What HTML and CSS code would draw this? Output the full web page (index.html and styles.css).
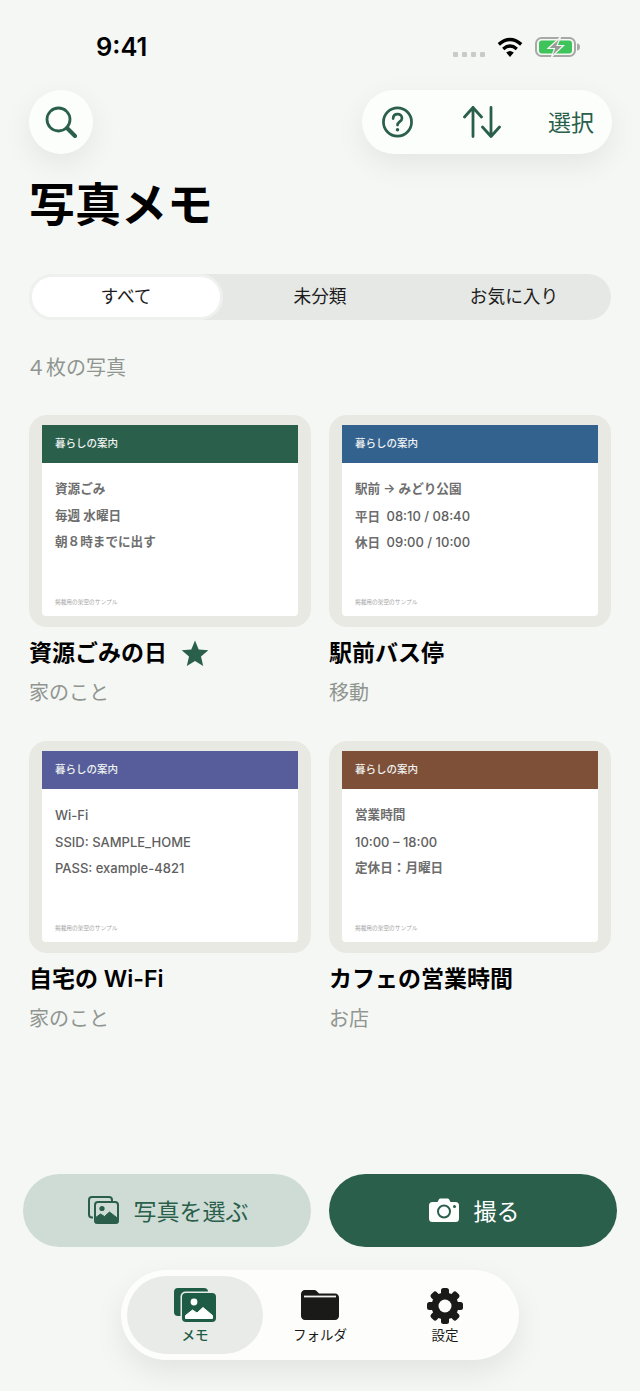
FILE: index.html
```html
<!DOCTYPE html>
<html lang="ja">
<head>
    <meta charset="UTF-8">
    <meta name="viewport" content="width=device-width, initial-scale=1.0">
    <title>写真メモ</title>
    <link rel="stylesheet" href="styles.css">
</head>
<body>
    <div class="page">
        <div class="status">
            <span class="time">9:41</span>
            <div class="status-right">
                <div class="dots"><i></i><i></i><i></i><i></i></div>
                <svg class="wifi" viewBox="0 0 26 20">
                    <path d="M1.8 7.4Q13-2.2 24.2 7.4" fill="none" stroke="#000" stroke-width="3.4"/>
                    <path d="M6.2 12Q13 6.2 19.8 12" fill="none" stroke="#000" stroke-width="3.4"/>
                    <path d="M13 20L9.2 15.4Q13 12.4 16.8 15.4Z" fill="#000"/>
                </svg>
                <svg class="battery" viewBox="0 0 46 20">
                    <rect x="1" y="1" width="39" height="18" rx="5.5" fill="none" stroke="#a7a9a5" stroke-width="2"/>
                    <rect x="4" y="3.5" width="33" height="13" rx="3" fill="#3ec45a"/>
                    <path d="M42 6.5c2 0 3 1.5 3 3.5s-1 3.5-3 3.5z" fill="#a7a9a5"/>
                    <path d="M25.5 0L13 11.5h6.500L16.500 20 28.500 8.500h-6.500z" fill="#989a96" stroke="#f5f7f5" stroke-width="1.2"/>
                </svg>
            </div>
        </div>

        <main class="main">
            <header class="toolbar">
                <button class="round-btn">
                    <svg class="icon-search" viewBox="0 0 32 32" fill="none" stroke="#2a5f4b">
                        <circle cx="13.5" cy="13.5" r="11.5" stroke-width="2.8"/>
                        <path d="M22 22l8 8" stroke-width="4" stroke-linecap="round"/>
                    </svg>
                </button>
                <div class="tool-pill">
                    <svg class="icon-help" viewBox="0 0 32 32" fill="none" stroke="#2a5f4b">
                        <circle cx="16" cy="16" r="14.5" stroke-width="2.8"/>
                        <path d="M11.5 12.5c0-3 2-4.700 4.600-4.700s4.500 1.700 4.500 4.200c0 3.600-4.600 3.600-4.600 7.200" stroke-width="2.8" stroke-linecap="round"/>
                        <circle cx="16" cy="24" r="1.8" fill="#2a5f4b" stroke="none"/>
                    </svg>
                    <svg class="icon-sort" viewBox="0 0 38 32" fill="none" stroke="#2a5f4b" stroke-width="2.8" stroke-linecap="round" stroke-linejoin="round">
                        <path d="M10 30.500V1.500M1.500 11L10 1.500 18.500 11"/>
                        <path d="M28 1.500v29M19.500 21l8.500 9.500 8.500-9.500"/>
                    </svg>
                    <span class="select-label">選択</span>
                </div>
            </header>

            <h1 class="title">写真メモ</h1>

            <div class="segments">
                <div class="segment active">すべて</div>
                <div class="segment">未分類</div>
                <div class="segment">お気に入り</div>
            </div>

            <p class="count">４枚の写真</p>

            <section class="memos">
                <article class="memo">
                    <div class="photo">
                        <div class="sheet">
                            <div class="sheet-head green">暮らしの案内</div>
                            <div class="sheet-body">
                                <p>資源ごみ</p>
                                <p>毎週 水曜日</p>
                                <p>朝８時までに出す</p>
                            </div>
                            <div class="sheet-foot">掲載用の架空のサンプル</div>
                        </div>
                    </div>
                    <h3 class="memo-title">資源ごみの日
                        <svg class="star" viewBox="0 0 28 27"><path d="M14 .5l3.700 8.900 9.600.8-7.300 6.300 2.200 9.400L14 20.900 5.800 25.900 8 16.500.7 10.200l9.600-.8z" fill="#2a5f4b"/></svg>
                    </h3>
                    <p class="memo-sub">家のこと</p>
                </article>
                <article class="memo">
                    <div class="photo">
                        <div class="sheet">
                            <div class="sheet-head blue">暮らしの案内</div>
                            <div class="sheet-body">
                                <p>駅前 → みどり公園</p>
                                <p>平日&nbsp; <span class="latin">08:10 / 08:40</span></p>
                                <p>休日&nbsp; <span class="latin">09:00 / 10:00</span></p>
                            </div>
                            <div class="sheet-foot">掲載用の架空のサンプル</div>
                        </div>
                    </div>
                    <h3 class="memo-title">駅前バス停</h3>
                    <p class="memo-sub">移動</p>
                </article>
                <article class="memo">
                    <div class="photo">
                        <div class="sheet">
                            <div class="sheet-head indigo">暮らしの案内</div>
                            <div class="sheet-body">
                                <p class="latin">Wi-Fi</p>
                                <p class="latin">SSID: SAMPLE_HOME</p>
                                <p class="latin">PASS: example-4821</p>
                            </div>
                            <div class="sheet-foot">掲載用の架空のサンプル</div>
                        </div>
                    </div>
                    <h3 class="memo-title">自宅の Wi-Fi</h3>
                    <p class="memo-sub">家のこと</p>
                </article>
                <article class="memo">
                    <div class="photo">
                        <div class="sheet">
                            <div class="sheet-head brown">暮らしの案内</div>
                            <div class="sheet-body">
                                <p>営業時間</p>
                                <p class="latin">10:00 – 18:00</p>
                                <p>定休日：月曜日</p>
                            </div>
                            <div class="sheet-foot">掲載用の架空のサンプル</div>
                        </div>
                    </div>
                    <h3 class="memo-title">カフェの営業時間</h3>
                    <p class="memo-sub">お店</p>
                </article>
            </section>
        </main>

        <div class="actions">
            <button class="action pick">
                <svg class="icon-photos" viewBox="0 0 31 28">
                    <path d="M5 21.500H4a3 3 0 0 1-3-3V4a3 3 0 0 1 3-3h17a3 3 0 0 1 3 3v1" fill="none" stroke="#2a5f4b" stroke-width="2"/>
                    <rect x="7" y="6" width="23" height="21" rx="3" fill="none" stroke="#2a5f4b" stroke-width="2"/>
                    <circle cx="14" cy="12.500" r="2.600" fill="#2a5f4b"/>
                    <path d="M7 27v-5l5.500-4 4 2.500 5-4.500 8.500 6.500V27z" fill="#2a5f4b" stroke="#2a5f4b" stroke-linejoin="round"/>
                </svg>
                写真を選ぶ
            </button>
            <button class="action shoot">
                <svg class="icon-camera" viewBox="0 0 30 24">
                    <path d="M3.500 4h5l1.500-2.700c.3-.5.700-.8 1.300-.8h7.400c.6 0 1 .3 1.300.8L21.500 4h5A3.500 3.500 0 0 1 30 7.500v13a3.500 3.500 0 0 1-3.500 3.500h-23A3.500 3.500 0 0 1 0 20.500v-13A3.500 3.500 0 0 1 3.500 4z" fill="#fff"/>
                    <circle cx="15" cy="13.500" r="6" fill="none" stroke="#2a5f4b" stroke-width="2"/>
                    <circle cx="25.500" cy="8.500" r="1.500" fill="#2a5f4b"/>
                </svg>
                撮る
            </button>
        </div>

        <nav class="tabbar">
            <div class="tab active">
                <svg class="icon-memo" viewBox="0 0 42 34">
                    <rect x="0" y="0" width="34" height="28" rx="4" fill="#1f5c45"/>
                    <rect x="6.500" y="3.500" width="35.500" height="30.500" rx="5" fill="#e9ebe9"/>
                    <rect x="8" y="5" width="34" height="29" rx="4" fill="#1f5c45"/>
                    <circle cx="20" cy="14" r="3.400" fill="#fff"/>
                    <path d="M11.500 30.500v-3l7-5.500 4.500 3 6-5.500 9.500 8v3z" fill="#fff" stroke="#fff" stroke-linejoin="round"/>
                </svg>
                <span class="tab-label">メモ</span>
            </div>
            <div class="tab">
                <svg class="icon-folder" viewBox="0 0 38 30">
                    <path d="M4 0h9c1.500 0 2.300.6 3.300 1.700L18 3.500h16c2.300 0 4 1.700 4 4V26c0 2.300-1.700 4-4 4H4c-2.300 0-4-1.700-4-4V4c0-2.300 1.700-4 4-4z" fill="#1a1a18"/>
                    <path d="M3 6.500h32" stroke="#f3f3f1" stroke-width="1.800"/>
                </svg>
                <span class="tab-label">フォルダ</span>
            </div>
            <div class="tab">
                <svg class="icon-gear" viewBox="0 0 36 36">
                    <circle cx="18" cy="18" r="13.500" fill="#1a1a18"/>
                    <g fill="#1a1a18">
                        <rect x="14" y="0" width="8" height="36" rx="2.500"/>
                        <rect x="14" y="0" width="8" height="36" rx="2.500" transform="rotate(45 18 18)"/>
                        <rect x="14" y="0" width="8" height="36" rx="2.500" transform="rotate(90 18 18)"/>
                        <rect x="14" y="0" width="8" height="36" rx="2.500" transform="rotate(135 18 18)"/>
                    </g>
                    <circle cx="18" cy="18" r="6.500" fill="#fdfefc"/>
                </svg>
                <span class="tab-label">設定</span>
            </div>
        </nav>
    </div>
</body>
</html>
```

FILE: styles.css
```css
* {
    box-sizing: border-box;
}
body {
    margin: 0;
    background-color: #f5f7f5;
    color: #000;
    font-family: Inter, "Noto Sans CJK JP", sans-serif;
}
p, h1, h3 {
    margin: 0;
}
button {
    border: 0;
    padding: 0;
    font-family: inherit;
}
svg {
    display: block;
    flex: none;
}
.page {
    display: flex;
    flex-direction: column;
    min-height: 1391px;
    padding-bottom: 31px;
}

/* status bar */
.status {
    display: flex;
    justify-content: space-between;
    align-items: center;
    height: 28px;
    margin: 33px 0 29px;
    padding: 0 59px 0 96px;
}
.time {
    font-size: 25.5px;
    font-weight: 600;
    line-height: 28px;
}
.status-right {
    display: flex;
    align-items: center;
}
.dots {
    display: flex;
    gap: 4px;
    margin: 14px 12px 0 0;
}
.dots i {
    width: 5px;
    height: 5px;
    border-radius: 1px;
    background: #c9cbc9;
}
.wifi {
    width: 26px;
    height: 20px;
    margin-right: 12px;
}
.battery {
    width: 46px;
    height: 20px;
}

/* top */
.main {
    padding: 0 29px;
}
.toolbar {
    display: flex;
    justify-content: space-between;
    margin-right: -1px;
}
.round-btn {
    display: flex;
    align-items: center;
    justify-content: center;
    width: 64px;
    height: 64px;
    border-radius: 50%;
    background: #fcfefc;
    box-shadow: 0 10px 30px rgba(0, 0, 0, 0.07);
}
.icon-search {
    width: 32px;
    height: 32px;
}
.tool-pill {
    display: flex;
    align-items: center;
    width: 250px;
    height: 64px;
    padding-left: 20px;
    border-radius: 32px;
    background: #fcfefc;
    box-shadow: 0 10px 30px rgba(0, 0, 0, 0.07);
}
.icon-help {
    width: 31px;
    height: 32px;
    margin-right: 50px;
}
.icon-sort {
    width: 38px;
    height: 32px;
    margin-right: 47px;
}
.select-label {
    padding-top: 2px;
    color: #2a5f4b;
    font-size: 23px;
    line-height: 30px;
}
.title {
    margin-top: 25px;
    font-size: 46px;
    font-weight: 700;
    line-height: 50px;
}

/* filter */
.segments {
    display: grid;
    grid-template-columns: 188px 1fr 188px;
    height: 46px;
    margin-top: 45px;
    padding: 3px;
    border-radius: 23px;
    background: #e6e8e6;
}
.segment {
    border-radius: 20px;
    color: #1c1c1c;
    font-size: 17.7px;
    line-height: 40px;
    text-align: center;
}
.segment.active {
    background: #fff;
    box-shadow: 0 0 0 3px #eff1ef;
}
.count {
    margin-top: 34px;
    color: #909590;
    font-size: 20px;
    line-height: 28px;
    text-indent: -3px;
}

/* memo cards */
.memos {
    display: grid;
    grid-template-columns: 282px 282px;
    gap: 35px 18px;
    margin-top: 33px;
}
.photo {
    height: 212px;
    padding: 10px 13px 11px;
    border-radius: 18px;
    background: #e9e9e3;
}
.sheet {
    display: flex;
    flex-direction: column;
    height: 100%;
    border-radius: 0 0 4px 4px;
    background: #fff;
    overflow: hidden;
}
.sheet-head {
    height: 38px;
    padding-left: 13px;
    color: #f0f3f1;
    font-size: 10.5px;
    font-weight: 500;
    line-height: 37px;
}
.green { background: #2a5f4b; }
.blue { background: #34628f; }
.indigo { background: #565d9a; }
.brown { background: #7e5038; }
.sheet-body {
    padding: 13px 13px 0;
    color: #6e6e6e;
    font-size: 12.6px;
    font-weight: 600;
    line-height: 26.6px;
}
.sheet-body p {
    height: 26.6px;
}
.latin {
    font-size: 13px;
    font-weight: 500;
    color: #606060;
}
.sheet-foot {
    margin-top: auto;
    padding: 0 0 10px 13px;
    color: #a5a5a5;
    font-size: 5.7px;
    line-height: 8px;
}
.memo-title {
    display: flex;
    align-items: center;
    gap: 14px;
    margin-top: 11px;
    font-size: 23px;
    font-weight: 600;
    line-height: 30px;
}
.star {
    width: 28px;
    height: 27px;
}
.memo-sub {
    margin-top: 10px;
    padding-top: 1px;
    height: 28px;
    color: #909590;
    font-size: 20px;
    line-height: 28px;
}

/* bottom */
.actions {
    display: grid;
    grid-template-columns: 1fr 1fr;
    gap: 18px;
    margin-top: auto;
    padding: 0 23px;
}
.action {
    display: flex;
    align-items: center;
    justify-content: center;
    gap: 15px;
    height: 73px;
    padding: 0 0 2px 2px;
    border-radius: 37px;
    font-size: 23px;
}
.pick {
    background: #cfdcd6;
    color: #2a5f4b;
}
.shoot {
    background: #2a5f4b;
    color: #fff;
}
.icon-photos {
    width: 31px;
    height: 28px;
}
.icon-camera {
    width: 30px;
    height: 24px;
}
.tabbar {
    display: grid;
    grid-template-columns: 136px 114px 136px;
    align-self: center;
    width: 398px;
    height: 90px;
    margin-top: 23px;
    padding: 6px;
    border-radius: 45px;
    background: #fdfefc;
    box-shadow: 0 12px 30px rgba(0, 0, 0, 0.08);
}
.tab {
    display: flex;
    flex-direction: column;
    align-items: center;
    height: 78px;
    padding-top: 12px;
    border-radius: 39px;
    color: #1a1a18;
}
.tab.active {
    background: #e9ebe9;
    color: #1f5c45;
}
.tab.active .tab-label {
    font-weight: 500;
}
.icon-memo {
    width: 42px;
    height: 34px;
}
.icon-folder {
    width: 38px;
    height: 30px;
    margin: 2px 0;
}
.icon-gear {
    width: 36px;
    height: 36px;
    margin-bottom: -2px;
}
.tab-label {
    margin-top: 4px;
    font-size: 13.5px;
    line-height: 18px;
}
```
